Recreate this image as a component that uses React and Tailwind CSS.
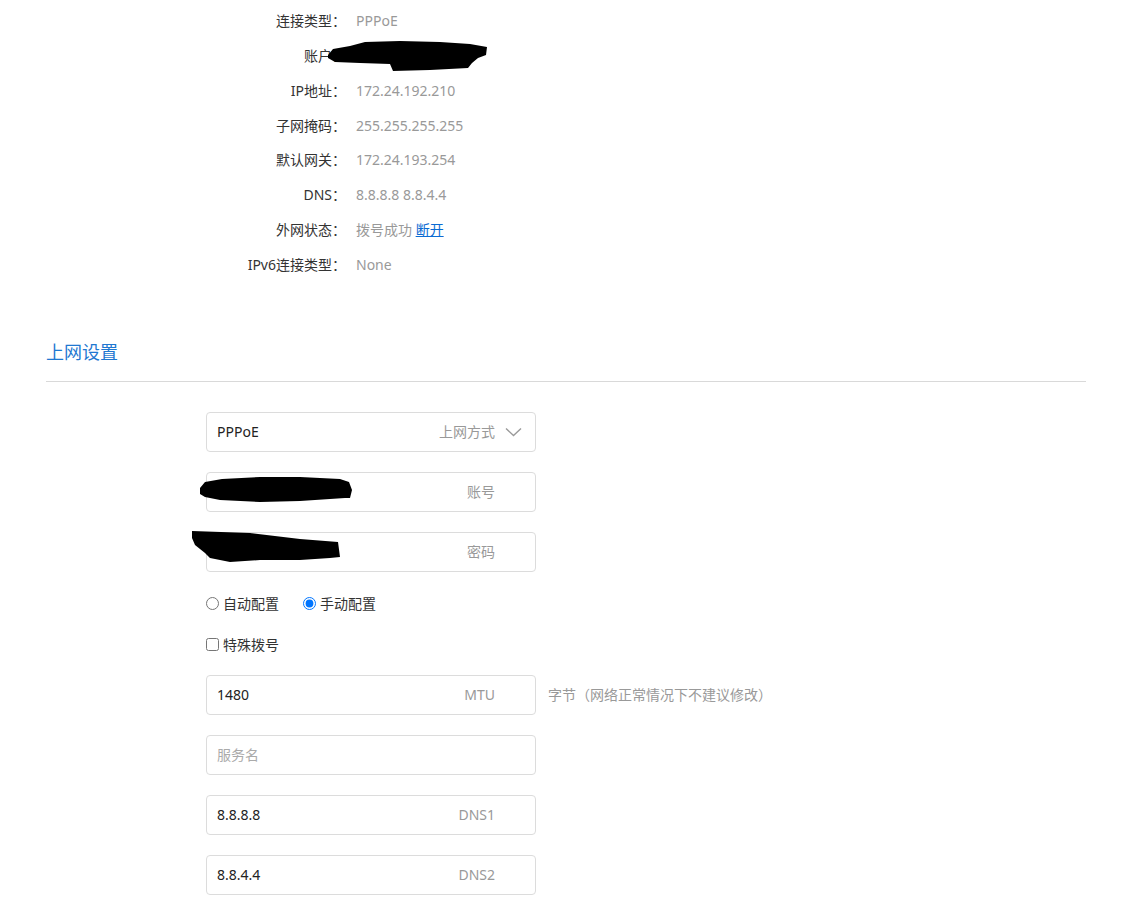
import React from "react";

const infoRows = [
  ["连接类型：", "PPPoE"],
  ["账户：", ""],
  ["IP地址：", "172.24.192.210"],
  ["子网掩码：", "255.255.255.255"],
  ["默认网关：", "172.24.193.254"],
  ["DNS：", "8.8.8.8 8.8.4.4"],
  ["外网状态：", "link"],
  ["IPv6连接类型：", "None"],
];

function Field({ value, placeholder, suffix, children }) {
  return (
    <div className="flex h-[40px] w-[330px] items-center rounded-[4px] border border-[#dcdcdc] bg-white pb-[1px] pl-[10px] pr-[40px] text-[14px]">
      {value ? (
        <span className="flex-1 text-[#222]">{value}</span>
      ) : (
        <span className="flex-1 text-[#aaa]">{placeholder}</span>
      )}
      {suffix && <span className="text-[#999]">{suffix}</span>}
      {children}
    </div>
  );
}

export default function App() {
  return (
    <div
      className="relative h-[921px] w-[1123px] overflow-hidden bg-white"
      style={{ fontFamily: '"Noto Sans", "Noto Sans CJK SC", sans-serif' }}
    >
      <div className="pt-[3px]">
        {infoRows.map(([label, value]) => (
          <div key={label} className="flex h-[34.86px] items-center text-[14px]">
            <div className="w-[346px] text-right text-[#333]">{label}</div>
            <div className="pl-[10px] text-[#999]">
              {value === "link" ? (
                <span>
                  拨号成功 <span className="text-[#0b6bd3] underline">断开</span>
                </span>
              ) : (
                value
              )}
            </div>
          </div>
        ))}
      </div>

      <div className="ml-[46px] mt-[58px] w-[1040px] border-b border-[#d9d9d9] pb-[17px]">
        <div className="text-[18px] leading-[24px] text-[#1f78d1]">上网设置</div>
      </div>

      <div className="ml-[206px] mt-[30px] flex flex-col">
        <div className="flex h-[40px] w-[330px] items-center rounded-[4px] border border-[#dcdcdc] pb-[1px] pl-[10px] pr-[13px] text-[14px]">
          <span className="flex-1 text-[#222]">PPPoE</span>
          <span className="text-[#999]">上网方式</span>
          <svg width="17" height="10" viewBox="0 0 17 10" className="ml-[10px] mt-[2px]">
            <polyline points="1,1.5 8.5,8.5 16,1.5" fill="none" stroke="#9a9a9a" strokeWidth="1.4" />
          </svg>
        </div>
        <div className="mt-[20px]">
          <Field value="" placeholder="" suffix="账号" />
        </div>
        <div className="mt-[20px]">
          <Field value="" placeholder="" suffix="密码" />
        </div>

        <div className="mt-[22px] flex h-[20px] items-center text-[14px] text-[#333]">
          <label className="flex items-center">
            <input type="radio" name="cfg" className="m-0 h-[13px] w-[13px]" readOnly />
            <span className="ml-[4px] -mt-[1px]">自动配置</span>
          </label>
          <label className="ml-[24px] flex items-center">
            <input type="radio" name="cfg" className="m-0 h-[13px] w-[13px]" defaultChecked />
            <span className="ml-[4px] -mt-[1px]">手动配置</span>
          </label>
        </div>

        <div className="mt-[21px] flex h-[20px] items-center text-[14px] text-[#333]">
          <input type="checkbox" className="m-0 h-[13px] w-[13px]" />
          <span className="ml-[4px] -mt-[1px]">特殊拨号</span>
        </div>

        <div className="mt-[20px] flex items-center">
          <Field value="1480" suffix="MTU" />
          <span className="-mt-[1px] ml-[12px] text-[14px] text-[#999]">字节（网络正常情况下不建议修改）</span>
        </div>
        <div className="mt-[20px]">
          <Field value="" placeholder="服务名" />
        </div>
        <div className="mt-[20px]">
          <Field value="8.8.8.8" suffix="DNS1" />
        </div>
        <div className="mt-[20px]">
          <Field value="8.8.4.4" suffix="DNS2" />
        </div>
      </div>

      <svg
        className="pointer-events-none absolute left-0 top-0"
        width="1123"
        height="921"
        viewBox="0 0 1123 921"
      >
        <polygon
          fill="#000"
          points="328,55 333,49 350,46 365,42 400,41 440,42 470,44 487,47 486,55 478,58 472,63 468,68 430,70 393,71 390,64 360,63 335,62 328,58"
        />
        <polygon
          fill="#000"
          points="200,488 205,482 222,479 260,477 300,477 340,479 349,482 352,490 350,498 345,498 300,501 260,502 220,500 205,497 200,494"
        />
        <polygon
          fill="#000"
          points="192,531 250,533 300,539 338,542 340,557 330,558 300,560 260,560 230,562 210,558 205,553 195,545 192,538"
        />
      </svg>
    </div>
  );
}
